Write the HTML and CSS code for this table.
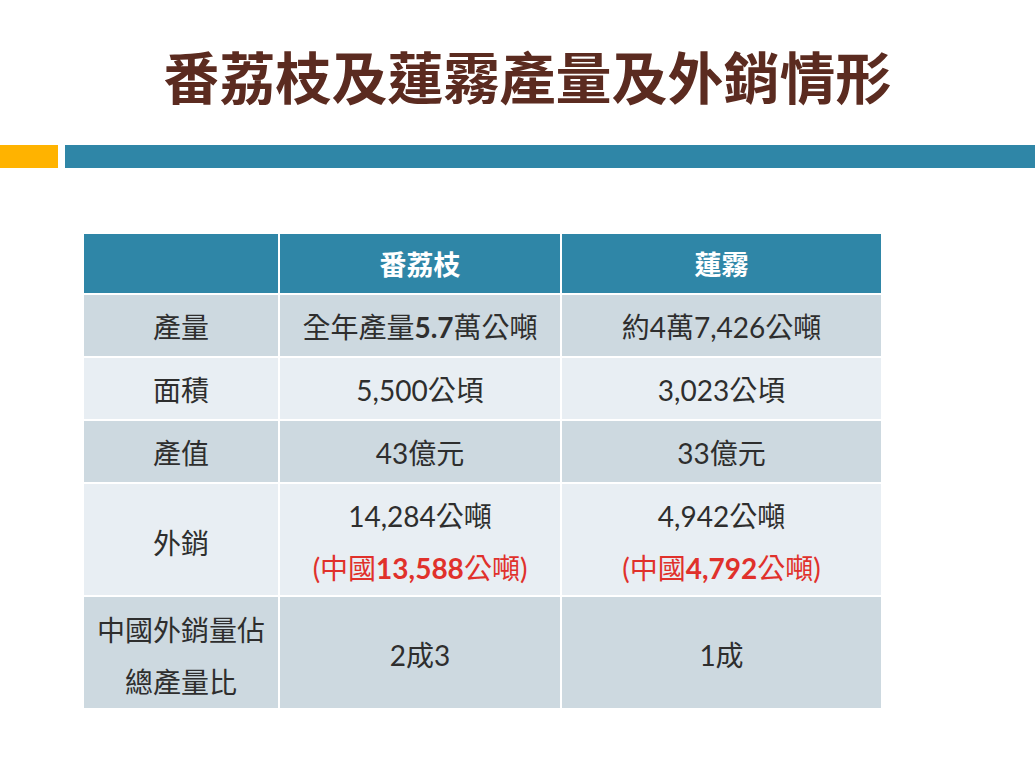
FILE: index.html
```html
<!DOCTYPE html>
<html lang="zh-Hant">
<head>
<meta charset="utf-8">
<link rel="stylesheet" href="styles.css">
</head>
<body>
<div class="slide">
  <h1 class="title">番荔枝及蓮霧產量及外銷情形</h1>
  <div class="bars">
    <div class="bar-orange"></div>
    <div class="bar-teal"></div>
  </div>
  <table class="data">
    <colgroup>
      <col class="c1"><col class="c2"><col class="c3">
    </colgroup>
    <thead>
      <tr class="head"><th></th><th>番荔枝</th><th>蓮霧</th></tr>
    </thead>
    <tbody>
      <tr class="dark r1"><td>產量</td><td>全年產量<span class="b">5.7</span>萬公噸</td><td>約4萬7,426公噸</td></tr>
      <tr class="light r1"><td>面積</td><td>5,500公頃</td><td>3,023公頃</td></tr>
      <tr class="dark r1"><td>產值</td><td>43億元</td><td>33億元</td></tr>
      <tr class="light r2"><td>外銷</td><td>14,284公噸<br><span class="red">(中國<span class="b">13,588</span>公噸)</span></td><td>4,942公噸<br><span class="red">(中國<span class="b">4,792</span>公噸)</span></td></tr>
      <tr class="dark r3"><td>中國外銷量佔<br>總產量比</td><td>2成3</td><td>1成</td></tr>
    </tbody>
  </table>
</div>
</body>
</html>
```

FILE: styles.css
```css
html, body {
  margin: 0;
  padding: 0;
  background: #ffffff;
}
.slide {
  width: 1035px;
  height: 761px;
  overflow: hidden;
}
.title {
  margin: 0;
  padding-top: 42px;
  height: 97px;
  box-sizing: border-box;
  text-align: center;
  font-family: "Noto Sans CJK TC", "Noto Sans CJK SC", sans-serif;
  font-weight: 700;
  font-size: 56px;
  line-height: 66px;
  letter-spacing: 0;
  color: #5b2b20;
  padding-left: 20px;
  white-space: nowrap;
}
.bars {
  display: flex;
  gap: 7px;
  height: 23px;
  margin-top: 48px;
}
.bar-orange {
  width: 58px;
  background: #ffb300;
}
.bar-teal {
  flex: 1;
  background: #2f86a7;
}
.data {
  margin-top: 66px;
  margin-left: 84px;
  width: 797px;
  border-collapse: collapse;
  table-layout: fixed;
  font-family: "Lato", "Noto Sans CJK TC", "Noto Sans CJK SC", sans-serif;
  font-size: 28px;
  color: #2e2e2e;
  text-align: center;
}
.c1 { width: 195px; }
.c2 { width: 282px; }
.c3 { width: 320px; }
.data th, .data td {
  border: 2px solid #ffffff;
  padding: 0;
  vertical-align: middle;
}
.data tr:first-child th { border-top: none; }
.data tr th:first-child, .data tr td:first-child { border-left: none; }
.data tr th:last-child, .data tr td:last-child { border-right: none; }
.data tbody tr:last-child td { border-bottom: none; }
.head th {
  background: #2f86a7;
  color: #ffffff;
  font-family: "Noto Sans CJK TC", "Noto Sans CJK SC", sans-serif;
  font-weight: 700;
  font-size: 27px;
  height: 59px;
}
.dark td { background: #cdd9e0; }
.light td { background: #e8eef3; }
.r1 td { height: 61px; }
.r2 td { height: 113px; line-height: 52px; padding-top: 4px; box-sizing: border-box; }
.r3 td { height: 112px; line-height: 52px; padding-top: 4px; box-sizing: border-box; }
.data td:first-child {
  font-family: "Noto Sans CJK TC", "Noto Sans CJK SC", sans-serif;
  font-weight: 400;
}
.b { font-weight: 700; }
.red { color: #e0312b; }
```
